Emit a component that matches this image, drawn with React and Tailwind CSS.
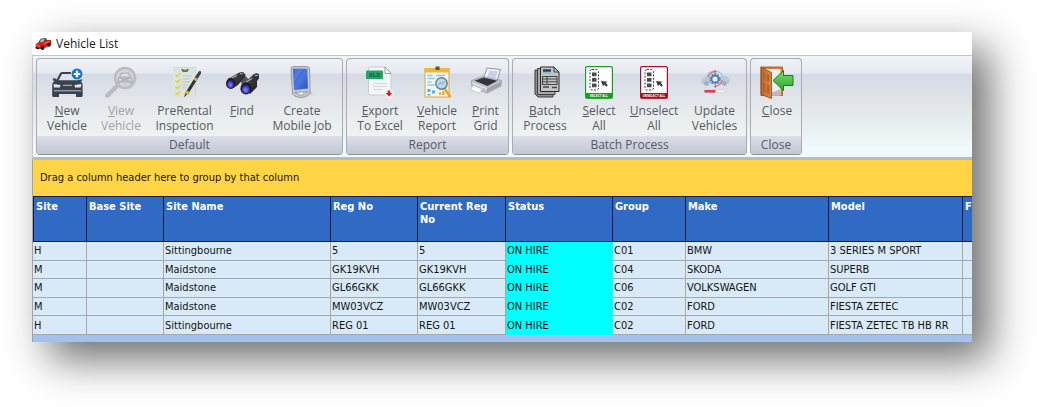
import React, { useState } from 'react';

/* ---------- icons ---------- */

function CarShape({ color, light }) {
    return (
        <g>
            <path d="M4.5 16 L8.8 7.5 Q9.3 6 11 6 H22 Q23.7 6 24.2 7.5 L28.5 16 Z" fill={color} />
            <path d="M7.5 14.5 L11 8 H22 L25.5 14.5 Z" fill={light} />
            <path d="M1.5 12.5 H5.5 V15 H2.5 Z M31.5 13.5 H27.5 V15.5 H30.5 Z" fill={color} />
            <path d="M1.2 19 Q1.2 15.5 5 14.5 H28 Q31.6 15.5 31.6 19 V28 H1.2 Z" fill={color} />
            <path d="M2.5 18 L9.5 19 L9 21.5 H3 Z M30.3 18 L23.5 19 L24 21.5 H29.8 Z" fill={light} />
            <path d="M12 19.3 H21 M3 24.8 H30" stroke={light} strokeWidth="0.8" />
            <path d="M1.2 27 H8 V31 H2.5 Q1.2 31 1.2 30 Z M25 27 H31.6 V30 Q31.6 31 30.3 31 H25 Z" fill={color} />
        </g>
    );
}

function NewVehicleIcon() {
    return (
        <svg width="32" height="32" viewBox="0 0 32 32">
            <CarShape color="#39424e" light="#dfe3ea" />
            <circle cx="26" cy="8" r="6.2" fill="#e9edf3" />
            <circle cx="26" cy="8" r="5.5" fill="#1f78bf" />
            <path d="M26 4.8 V11.2 M22.8 8 H29.2" stroke="#fff" strokeWidth="2.2" />
        </svg>
    );
}

function ViewVehicleIcon() {
    return (
        <svg width="32" height="32" viewBox="0 0 32 32">
            <path d="M11.5 20.5 L2.5 29.5" stroke="#b9bbbf" strokeWidth="4.4" strokeLinecap="round" />
            <circle cx="20" cy="12" r="10" fill="#d0d3d9" stroke="#bbbdc1" strokeWidth="2.6" />
            <path d="M14 11 L16 6.5 H24 L26 11 Q27.5 11.5 27.5 13 V18 H25 V16.5 H15 V18 H12.5 V13 Q12.5 11.5 14 11 Z" fill="#b4b6bb" />
            <path d="M15.5 10.5 L17 7.8 H23 L24.5 10.5 Z M14 13 H16.5 V14.5 H14 Z M23.5 13 H26 V14.5 H23.5 Z" fill="#dadde2" />
        </svg>
    );
}

function InspectionIcon() {
    return (
        <svg width="32" height="32" viewBox="0 0 32 32">
            <rect x="4" y="1" width="23" height="30.5" fill="#dce4e0" />
            <path d="M4.5 1.5 H26.5 V31" fill="none" stroke="#cdd6d3" />
            <path d="M12 3 H20 L18.5 6 H13.5 Z" fill="#6f7468" />
            <path d="M14.5 3.5 H17.5" stroke="#c9cf58" />
            <path d="M6.5 8.5 l2 2 l3 -3.5 M6.5 14.5 l2 2 l3 -3.5 M6.5 20.5 l2 2 l3 -3.5 M6.5 26.5 l2 2 l3 -3.5" fill="none" stroke="#d9d94a" strokeWidth="1.6" />
            <path d="M13.5 10 H23 M13.5 13 H21 M13.5 16 H21 M13.5 19 H19 M13.5 22 H17" stroke="#b5cbc4" />
            <path d="M15 31.5 L16.5 26 L18.8 27.8 Z" fill="#59422a" />
            <path d="M18 27 L28 11" stroke="#2c3440" strokeWidth="3.2" />
            <path d="M28 11 L30.8 6.5" stroke="#39424e" strokeWidth="3" strokeLinecap="round" />
            <path d="M17.3 28 L19.2 25 M25.8 14.5 L27.4 12" stroke="#e2aa3c" strokeWidth="3.2" />
        </svg>
    );
}

function FindIcon() {
    return (
        <svg width="33" height="32" viewBox="0 0 33 32">
            <defs>
                <linearGradient id="barrel" x1="0" y1="0" x2="1" y2="1">
                    <stop offset="0" stopColor="#85858b" />
                    <stop offset="0.4" stopColor="#3a3a3e" />
                    <stop offset="1" stopColor="#1b1b1e" />
                </linearGradient>
                <radialGradient id="lens" cx="0.45" cy="0.6" r="0.6">
                    <stop offset="0" stopColor="#8d8cff" />
                    <stop offset="0.6" stopColor="#4341c8" />
                    <stop offset="1" stopColor="#1d1b66" />
                </radialGradient>
            </defs>
            <path d="M13 10 L18 8 L23 14 L16 19 Z" fill="#55555a" />
            <path d="M1.5 13 L9 9 Q13 5.5 17 6 L19.5 8.5 L18 12 L12 19 L6.5 22.5 Z" fill="url(#barrel)" />
            <path d="M17 16 L23 12.5 L28 8 Q31 6.5 33 8.5 L33 12.5 L31 15 L31 21 L24 28 Z" fill="url(#barrel)" />
            <path d="M5 12.5 L11 9.5 M20 16 L26 12.5 M29 9.5 L32 9.5 M14 8 L17 7.5" stroke="#a9a9ae" strokeWidth="1.2" />
            <ellipse cx="4.7" cy="17.5" rx="4.7" ry="5.4" fill="#1b1b1f" />
            <ellipse cx="4.7" cy="18" rx="3.4" ry="4" fill="url(#lens)" />
            <ellipse cx="20" cy="22.5" rx="5.6" ry="6" fill="#1b1b1f" />
            <ellipse cx="20" cy="23" rx="4.2" ry="4.6" fill="url(#lens)" />
        </svg>
    );
}

function MobileIcon() {
    return (
        <svg width="32" height="32" viewBox="0 0 32 32">
            <defs>
                <linearGradient id="pdaScreen" x1="0" y1="0" x2="1" y2="1">
                    <stop offset="0" stopColor="#2b54bf" />
                    <stop offset="0.5" stopColor="#4a79e0" />
                    <stop offset="1" stopColor="#2a50b4" />
                </linearGradient>
            </defs>
            <path d="M9 29 L25 25 L27 28 L19 31.5 Z" fill="#b8bcc4" opacity="0.6" />
            <path d="M6.5 0.5 H20.5 Q23.5 0.5 23.7 3 L24 26 Q23 30 16 31.5 Q9 31.5 6.5 28 L5 3 Q5 0.5 6.5 0.5 Z" fill="#c3c6cc" stroke="#8b8e96" strokeWidth="0.8" />
            <path d="M6.8 2.7 H21.3 L21.8 22.5 L8.2 24 Z" fill="url(#pdaScreen)" />
            <path d="M6.8 2.7 H17 L7.5 17 Z" fill="#7e9fea" opacity="0.35" />
            <ellipse cx="15" cy="27.5" rx="3" ry="1.8" fill="#ecedf0" stroke="#85888f" strokeWidth="0.7" />
            <path d="M9 26.5 h2 M19 26 h2.5" stroke="#7b7e86" />
        </svg>
    );
}

function ExcelIcon() {
    return (
        <svg width="32" height="33" viewBox="0 0 32 33">
            <path d="M4.5 3 Q4.5 1 6.5 1 H21 L27 7.5 V27 Q27 29 25 29 H6.5 Q4.5 29 4.5 27 Z" fill="#f4f5f6" stroke="#c9ccd0" />
            <path d="M21 1 V7.5 H27 Z" fill="#fff" stroke="#8f9398" strokeWidth="0.9" />
            <path d="M9 17.5 H23 M9 20.5 H23 M9 23.5 H19" stroke="#d4d6d9" />
            <rect x="2" y="4.5" width="17" height="8.5" rx="1" fill="#23a566" />
            <text x="10.5" y="11" textAnchor="middle" fontSize="6" fontWeight="700" fontFamily="Liberation Sans, sans-serif" fill="#0d5c38">XLS</text>
            <circle cx="25" cy="27.5" r="4.7" fill="#fbeeee" />
            <path d="M23.8 24.5 H26.2 V27 H28.2 L25 30.4 L21.8 27 H23.8 Z" fill="#e5151f" />
        </svg>
    );
}

function ReportIcon() {
    return (
        <svg width="32" height="32" viewBox="0 0 32 32">
            <rect x="4" y="2.5" width="24" height="28.5" fill="#eef6f8" stroke="#d9a848" />
            <rect x="3.5" y="2" width="25" height="4.5" fill="#f0b63c" />
            <path d="M14.5 0.5 h4 v3.5 h-4 Z" fill="#4a5560" />
            <path d="M6.5 9.5 h5 M6.5 12.5 h7 M6.5 16 h4 M6.5 19 h7 M15 9.5 h9" stroke="#8ccbe0" strokeWidth="1.4" />
            <path d="M6.5 23 h3 v3 h-3 Z M11 24.5 h3 v3 h-3 Z M6.5 28 h3 v1.5 h-3 Z" fill="#56b2d6" />
            <path d="M18 26 h2 v3 h-2 Z M21 25 h2.5 v4 h-2.5 Z" fill="#f0ac2c" />
            <path d="M23.5 22.5 L29.5 31" stroke="#eda52a" strokeWidth="2.6" />
            <circle cx="20.5" cy="17.5" r="5.7" fill="#b9dbe6" stroke="#6c7a82" strokeWidth="1.4" />
            <path d="M17.5 19 l2.5 -2.5 l1.5 1.2 l2.5 -2.5" fill="none" stroke="#8fb8c4" strokeWidth="1.2" />
        </svg>
    );
}

function PrintIcon() {
    return (
        <svg width="32" height="32" viewBox="0 0 32 32">
            <path d="M17 2 L30.5 3.5 L27 15 L13.5 12.5 Z" fill="#f2f4f8" stroke="#878b93" strokeWidth="0.9" />
            <path d="M19.5 4.5 L28 5.5 L25.5 12.5 L17 11 Z" fill="#c9d2e4" />
            <path d="M1.5 14.5 L13 10.5 L31.5 14.5 L31 20 L17 27 L2 21 Z" fill="#c1c4cb" stroke="#8b8e96" strokeWidth="0.7" />
            <path d="M4.5 14.8 L13.5 11.5 L27.5 14.8 L17.5 20 Z" fill="#34363b" />
            <path d="M17 22.5 L31 15.5 V19.5 L17 26.5 Z" fill="#9fa3ab" />
            <path d="M3.5 19.5 L12.5 23.3 L8.5 27 L0.5 23.5 Z" fill="#fff" stroke="#b2bfd6" strokeWidth="0.7" />
            <path d="M2 17 L17 22.8" stroke="#f1f2f4" />
        </svg>
    );
}

function BatchIcon() {
    return (
        <svg width="32" height="32" viewBox="0 0 32 32">
            <path d="M6 4 H24 V31 H9 L6 28 Z" fill="#8f8f92" stroke="#3d3d40" />
            <path d="M8.5 2.5 H26 V28.5 H8.5 Z" fill="#a9a9ac" stroke="#3d3d40" />
            <path d="M11.5 1 H25 L30 6 V25.5 H11.5 Z" fill="#c4c4c7" stroke="#29292c" />
            <path d="M25 1 V6 H30 Z" fill="#7ec8ec" stroke="#29292c" strokeWidth="0.8" />
            <path d="M14 4.5 h8" stroke="#2b3a44" strokeWidth="2.4" />
            <path d="M14 7 h8" stroke="#52b5da" strokeWidth="1" />
            <path d="M13.5 10.5 H28 V18.5 H13.5 Z M13.5 13 H28 M13.5 15.8 H28 M18 10.5 V18.5" fill="none" stroke="#47474a" strokeWidth="1.1" />
            <path d="M14 21 h6 M23 21.5 h5" stroke="#47474a" strokeWidth="1.4" />
        </svg>
    );
}

function SelectionIcon({ color, label }) {
    return (
        <svg width="32" height="33" viewBox="0 0 32 33">
            <rect x="2.6" y="0.6" width="26.8" height="31.5" rx="1.5" fill="#fff" stroke={color} strokeWidth="1.2" />
            <rect x="2.5" y="27" width="27" height="5.5" fill={color} />
            <rect x="7" y="3.5" width="8.5" height="20.5" rx="2" fill="none" stroke="#3c3c40" strokeWidth="1" strokeDasharray="2 1.4" />
            <path d="M9 6.5 h4.5 v3.8 h-4.5 Z M9 12 h4.5 v3.8 h-4.5 Z M9 17.5 h4.5 v3.8 h-4.5 Z" fill="#4a4a4f" />
            <path d="M18 15 L24.5 15.7 L22.8 17 L24.8 19.2 L23.4 20.7 L21.3 18.5 L20 20.2 Z" fill="#3c3c40" />
            <text x="16" y="31" textAnchor="middle" fontSize="3" fontWeight="700" fontFamily="Liberation Sans, sans-serif" fill="#fff">{label}</text>
        </svg>
    );
}

function UpdateIcon() {
    return (
        <svg width="32" height="32" viewBox="0 0 32 32">
            <path d="M2.5 17.5 Q1 12.5 6 11 Q9 4.5 15 4.5 Q21 4 24.5 9.5 Q30.5 10 31 15 Q30.5 18 28 18 H5 Q3 18.5 2.5 17.5 Z" fill="#b9cbd8" />
            <path d="M9 10.5 Q11 7 14 6.5 V10.5 Z M18 6.5 Q21 7 22.5 10.5 H18 Z" fill="#dde9f1" />
            <circle cx="7.5" cy="17.5" r="2.4" fill="#9db0be" />
            <circle cx="25.5" cy="17.5" r="2.4" fill="#9db0be" />
            <circle cx="16" cy="13" r="4.6" fill="#e4ecf3" stroke="#5c87bb" strokeWidth="2" strokeDasharray="2 0.9" />
            <circle cx="16" cy="13" r="3.4" fill="none" stroke="#4a7ab5" strokeWidth="1.6" />
            <path d="M9 11 Q10.5 6 16 5.3 M23.3 14 Q22.5 19 16.5 20.3" fill="none" stroke="#e0666c" strokeWidth="1.2" />
            <path d="M15.5 3.8 L18 5.3 L15.6 7 Z M17 18.8 L14.5 20.4 L17 22 Z" fill="#e0666c" />
            <rect x="5.5" y="24" width="20.5" height="2.6" fill="#f3f3f5" stroke="#c4c7cd" strokeWidth="0.5" />
            <rect x="5.5" y="24" width="11" height="2.6" fill="#dc3f48" />
        </svg>
    );
}

function CloseIcon() {
    return (
        <svg width="34" height="33" viewBox="0 0 34 33">
            <defs>
                <linearGradient id="door" x1="0" y1="0" x2="1" y2="0">
                    <stop offset="0" stopColor="#b9652a" />
                    <stop offset="1" stopColor="#db8c45" />
                </linearGradient>
                <linearGradient id="exit" x1="0" y1="0" x2="0" y2="1">
                    <stop offset="0" stopColor="#7bdc6a" />
                    <stop offset="1" stopColor="#2fa52c" />
                </linearGradient>
            </defs>
            <rect x="1" y="1" width="21.5" height="28.5" fill="#d98035" stroke="#9c5218" strokeWidth="0.8" />
            <rect x="3" y="3" width="17.5" height="26.5" fill="#eceef0" />
            <path d="M11 27 L20.5 23 V29.5 H11 Z" fill="#b8bbbf" />
            <path d="M1 1 L11.5 6.5 V32.5 L1 28.5 Z" fill="url(#door)" stroke="#8b4715" strokeWidth="0.8" />
            <path d="M3 5.5 L5.3 6.7 V14 L3 13.3 Z M7 7.6 L9.5 8.9 V15.5 L7 14.7 Z M3 17 L5.3 17.6 V26.5 L3 25.6 Z M7 18.2 L9.5 18.9 V28.2 L7 27.2 Z" fill="#b5642a" />
            <path d="M13 14.5 L23.5 4.5 V9.5 H33 V19.5 H23.5 V24.5 Z" fill="url(#exit)" stroke="#1c7a1c" />
        </svg>
    );
}

function TitleIcon() {
    return (
        <svg width="17" height="14" viewBox="0 0 17 14">
            <path d="M3 5.5 L6 1.5 L11 1 L12.5 4 L8 6 Z" fill="#4a4a4a" />
            <path d="M6 2.5 L10 2 L8 5 L5 5 Z" fill="#b4bcc4" />
            <path d="M0.5 7.5 L4 5 L8 5.5 L12 3 L16 3 L16.5 7 L11 10.5 L5 12 L1 11 Z" fill="#e01b12" />
            <path d="M1.5 8.5 L5 9 M9 6.5 L14 4.5" stroke="#ff7d55" />
            <circle cx="7.5" cy="11" r="2" fill="#161616" />
            <circle cx="14" cy="7.8" r="1.9" fill="#161616" />
            <path d="M0.5 10.5 L4 11.8" stroke="#161616" strokeWidth="1.4" />
        </svg>
    );
}

/* ---------- data ---------- */

const groups = [
    {
        title: 'Default',
        items: [
            { key: 'N', lines: ['New', 'Vehicle'], width: 'w-[54px]', icon: <NewVehicleIcon /> },
            { key: 'V', lines: ['View', 'Vehicle'], width: 'w-[54px]', icon: <ViewVehicleIcon />, disabled: true },
            { lines: ['PreRental', 'Inspection'], width: 'w-[73px]', icon: <InspectionIcon /> },
            { key: 'F', lines: ['Find'], width: 'w-[42px]', icon: <FindIcon /> },
            { lines: ['Create', 'Mobile Job'], width: 'w-[78px]', icon: <MobileIcon /> },
        ],
    },
    {
        title: 'Report',
        items: [
            { key: 'E', lines: ['Export', 'To Excel'], width: 'w-[60px]', icon: <ExcelIcon /> },
            { key: 'V', lines: ['Vehicle', 'Report'], width: 'w-[54px]', icon: <ReportIcon /> },
            { key: 'P', lines: ['Print', 'Grid'], width: 'w-[43px]', icon: <PrintIcon /> },
        ],
    },
    {
        title: 'Batch Process',
        items: [
            { key: 'B', lines: ['Batch', 'Process'], width: 'w-[58px]', icon: <BatchIcon /> },
            { key: 'S', lines: ['Select', 'All'], width: 'w-[50px]', icon: <SelectionIcon color="#17a01f" label="SELECT ALL" /> },
            { key: 'U', lines: ['Unselect', 'All'], width: 'w-[60px]', icon: <SelectionIcon color="#a80f22" label="UNSELECT ALL" /> },
            { lines: ['Update', 'Vehicles'], width: 'w-[61px]', icon: <UpdateIcon /> },
        ],
    },
    {
        title: 'Close',
        items: [{ key: 'C', lines: ['Close'], width: 'w-[46px]', icon: <CloseIcon /> }],
    },
];

const columns = [
    { name: 'Site', width: 'w-[54px]' },
    { name: 'Base Site', width: 'w-[77px]' },
    { name: 'Site Name', width: 'w-[167px]' },
    { name: 'Reg No', width: 'w-[87px]' },
    { name: 'Current Reg No', width: 'w-[88px]' },
    { name: 'Status', width: 'w-[107px]' },
    { name: 'Group', width: 'w-[73px]' },
    { name: 'Make', width: 'w-[143px]' },
    { name: 'Model', width: 'w-[134px]' },
    { name: 'F', width: '' },
];

const vehicles = [
    ['H', '', 'Sittingbourne', '5', '5', 'ON HIRE', 'C01', 'BMW', '3 SERIES M SPORT', ''],
    ['M', '', 'Maidstone', 'GK19KVH', 'GK19KVH', 'ON HIRE', 'C04', 'SKODA', 'SUPERB', ''],
    ['M', '', 'Maidstone', 'GL66GKK', 'GL66GKK', 'ON HIRE', 'C06', 'VOLKSWAGEN', 'GOLF GTI', ''],
    ['M', '', 'Maidstone', 'MW03VCZ', 'MW03VCZ', 'ON HIRE', 'C02', 'FORD', 'FIESTA ZETEC', ''],
    ['H', '', 'Sittingbourne', 'REG 01', 'REG 01', 'ON HIRE', 'C02', 'FORD', 'FIESTA ZETEC TB HB RR', ''],
];

/* ---------- ribbon ---------- */

function RibbonButton({ item }) {
    const [first, second] = item.lines;
    return (
        <button
            type="button"
            disabled={item.disabled}
            className={`${item.width} flex flex-col items-center whitespace-nowrap text-[#565963] disabled:text-[#a3a4a7]`}
        >
            <span className="mb-[5px] flex h-8">{item.icon}</span>
            <span>
                {item.key ? <span className="underline">{item.key}</span> : null}
                {item.key ? first.slice(1) : first}
            </span>
            {second && <span>{second}</span>}
        </button>
    );
}

function RibbonGroup({ group }) {
    return (
        <section className="flex flex-col rounded-sm border border-[#a9acb3] border-b-[#8f929a] bg-[linear-gradient(#eff1f6_0px,#e6e9f0_14px,#d6dae5_15px,#e6eaec_50px,#eef3f1_78px)] text-xs leading-[15px]">
            <div className="flex h-[77px] pt-[7px] pr-px pl-[3px]">
                {group.items.map((item) => (
                    <RibbonButton key={item.lines.join(' ')} item={item} />
                ))}
            </div>
            <h2 className="h-[18px] bg-linear-to-b from-[#dcdfea] to-[#c3c7d3] pt-px text-center text-[#565963]">{group.title}</h2>
        </section>
    );
}

/* ---------- grid ---------- */

function VehicleTable() {
    return (
        <table className="h-[139px] w-full table-fixed border-separate border-spacing-0 border-l border-[#a0a4aa] text-left text-[11px]">
            <thead>
                <tr className="h-[46px]">
                    {columns.map((col) => (
                        <th
                            key={col.name}
                            className={`${col.width} border-y border-r border-[#10203c] bg-[#316ac5] pt-[3px] pl-[2px] align-top leading-[13px] font-bold text-white first:border-l last:border-r-0`}
                        >
                            {col.name}
                        </th>
                    ))}
                </tr>
            </thead>
            <tbody>
                {vehicles.map((row, i) => (
                    <tr key={i}>
                        {row.map((value, j) => (
                            <td
                                key={j}
                                className={`border-r border-b pt-px pl-px leading-4 whitespace-nowrap last:border-r-0 ${
                                    value === 'ON HIRE' ? 'border-[#00ffff] bg-[#00ffff]' : 'border-[#a4a7ab] bg-[#d8eaf7]'
                                }`}
                            >
                                {value}
                            </td>
                        ))}
                    </tr>
                ))}
            </tbody>
        </table>
    );
}

function App() {
    const [title] = useState('Vehicle List');

    return (
        <div className="bg-white pt-8 pr-[65px] pb-[65px] pl-8 font-['Open_Sans',sans-serif]">
            <main className="bg-white shadow-[17px_17px_40px_rgba(0,0,0,0.58)]">
                <header className="flex h-[23px] items-center gap-1 pl-[3px]">
                    <TitleIcon />
                    <h1 className="text-xs text-[#1c1c1c]">{title}</h1>
                </header>

                <nav className="flex gap-[3px] border-t border-b-[3px] border-l border-t-[#c2c5cb] border-b-[#b9bcc2] border-l-[#c2c5cb] bg-[linear-gradient(#f1f4f9_0px,#e5e9f1_17px,#d5dae6_18px,#e2e6e9_50px,#effafa_92px)] px-[3px] py-[2px]">
                    {groups.map((group) => (
                        <RibbonGroup key={group.title} group={group} />
                    ))}
                </nav>

                <div className="font-['DejaVu_Sans_Condensed','DejaVu_Sans',sans-serif] text-[#141414]">
                    <p className="h-9 border-l border-[#a0a4aa] bg-[#ffd546] px-[7px] text-[11px] leading-9">
                        Drag a column header here to group by that column
                    </p>
                    <VehicleTable />
                    <div className="h-[7px] border-l border-[#a0a4aa] bg-[#a3c1ea]" />
                </div>
            </main>
        </div>
    );
}

export default App;
